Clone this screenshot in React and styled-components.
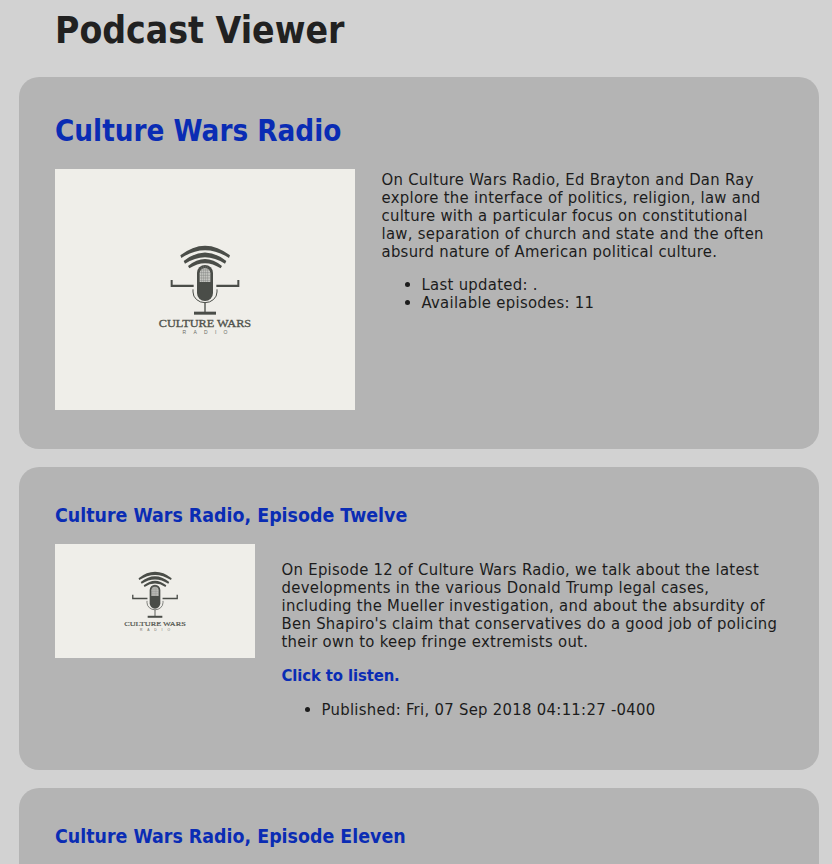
import React from "react";
import styled, { createGlobalStyle } from "styled-components";

const Global = createGlobalStyle`
  html, body { margin: 0; padding: 0; background: #d2d2d2; }
  body { font-family: "DejaVu Sans Condensed", "DejaVu Sans", "Liberation Sans", sans-serif; color: #1c1c1c; overflow: hidden; }
`;

const Page = styled.div`
  padding: 0 13px 0 19px;
  height: 864px;
  overflow: hidden;
`;

const Title = styled.h1`
  margin: 0;
  padding: 10px 0 0 36px;
  height: 77px;
  box-sizing: border-box;
  font-size: 37px;
  line-height: 42px;
  font-weight: 700;
  color: #212121;
`;

const Card = styled.section`
  background: #b4b4b4;
  border-radius: 20px;
  padding: ${(p) => (p.$feed ? "36px 36px 39px" : "36px")};
  margin-bottom: 18px;
`;

const FeedHeading = styled.h2`
  margin: 0 0 20px;
  font-size: 29.3px;
  line-height: 36px;
  font-weight: 700;
  color: #0a2cb4;
`;

const EpisodeHeading = styled.h3`
  margin: 0 0 16px;
  padding-top: 1px;
  font-size: 19.4px;
  line-height: 24px;
  font-weight: 700;
  color: #0a2cb4;
`;

const Body = styled.div`
  display: flex;
  align-items: flex-start;
  gap: 26.5px;
`;

const Cover = styled.div`
  flex: none;
  width: ${(p) => p.$w}px;
  height: ${(p) => p.$h}px;
  background: #efeee9;
  overflow: hidden;
`;

const Info = styled.div`
  flex: 1;
  min-width: 0;
  padding: ${(p) => p.$top}px 3px 0 0;
  font-size: 16.5px;
  line-height: 18px;
  letter-spacing: 0.3px;
`;

const Para = styled.p`
  margin: 0 0 15px;
`;

const Listen = styled.a`
  display: block;
  margin: 16px 0;
  color: #0a2cb4;
  font-weight: 700;
  letter-spacing: -0.1px;
  text-decoration: none;
  cursor: pointer;
`;

const Facts = styled.ul`
  margin: 0 0 ${(p) => p.$after}px;
  padding: 0 0 0 40px;
`;

const Logo = () => (
  <svg width="100%" height="100%" viewBox="-135 -153 900 723" preserveAspectRatio="xMidYMid slice" aria-hidden="true">
    <g fill="#4a4d48">
      <path d="M241 106 Q315 48 390 106 L387 114 Q315 68 244 114Z" />
      <path d="M251 123 Q315 72 379 123 L375 131 Q315 92 255 131Z" />
      <path d="M264 138 Q315 96 366 138 L362 145 Q315 114 268 145Z" />
      <rect x="291" y="135" width="48" height="108" rx="24" />
      <path d="M212 180h6v14h63v7h-69z" />
      <path d="M418 180h-6v14h-63v7h69z" />
      <rect x="313" y="248" width="4" height="30" />
      <rect x="282" y="275" width="66" height="9" />
    </g>
    <path d="M299 186V160a16 16 0 0 1 32 0V186Z" fill="#c9cac5" />
    <path d="M299 150H331M299 158H331M299 166H331M299 174H331M299 182H331M305 140V186M311 138V186M317 138V186M323 140V186" stroke="#7e807b" strokeWidth="1.4" fill="none" />
    <path d="M279 208V216A36 32 0 0 0 351 216V208" stroke="#4a4d48" strokeWidth="3" fill="none" />
    <text x="315" y="320" textAnchor="middle" textLength="277" lengthAdjust="spacingAndGlyphs" fontFamily="'Liberation Serif', serif" fontSize="31" fill="#4f524c" stroke="#4f524c" strokeWidth="0.9">CULTURE WARS</text>
    <text x="315" y="342" textAnchor="middle" textLength="135" fontFamily="'Liberation Sans', sans-serif" fontSize="15" fill="#6a6c66">RADIO</text>
  </svg>
);

export default function App() {
  return (
    <Page>
      <Global />
      <Title>Podcast Viewer</Title>
      <Card $feed>
        <FeedHeading>Culture Wars Radio</FeedHeading>
        <Body>
          <Cover $w={300} $h={241}><Logo /></Cover>
          <Info $top={2}>
            <Para>On Culture Wars Radio, Ed Brayton and Dan Ray explore the interface of politics, religion, law and culture with a particular focus on constitutional law, separation of church and state and the often absurd nature of American political culture.</Para>
            <Facts $after={0}>
              <li>Last updated: .</li>
              <li>Available episodes: 11</li>
            </Facts>
          </Info>
        </Body>
      </Card>
      <Card>
        <EpisodeHeading>Culture Wars Radio, Episode Twelve</EpisodeHeading>
        <Body>
          <Cover $w={200} $h={114}><Logo /></Cover>
          <Info $top={17}>
            <Para>On Episode 12 of Culture Wars Radio, we talk about the latest developments in the various Donald Trump legal cases, including the Mueller investigation, and about the absurdity of Ben Shapiro's claim that conservatives do a good job of policing their own to keep fringe extremists out.</Para>
            <Listen>Click to listen.</Listen>
            <Facts $after={15}>
              <li>Published: Fri, 07 Sep 2018 04:11:27 -0400</li>
            </Facts>
          </Info>
        </Body>
      </Card>
      <Card>
        <EpisodeHeading>Culture Wars Radio, Episode Eleven</EpisodeHeading>
      </Card>
    </Page>
  );
}
